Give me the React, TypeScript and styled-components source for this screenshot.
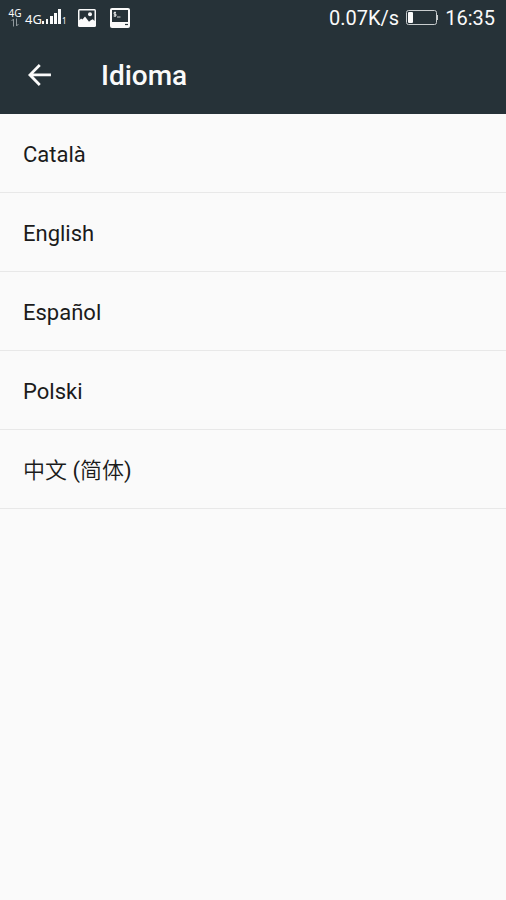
import React from "react";
import styled, { createGlobalStyle } from "styled-components";

const GlobalStyle = createGlobalStyle`
  *, *::before, *::after { box-sizing: border-box; }
  body {
    margin: 0;
    background: #fafafa;
    font-family: Roboto, "Noto Sans CJK SC", sans-serif;
  }
`;

const Screen = styled.div`
  min-height: 100vh;
  background: #fafafa;
`;

const Header = styled.header`
  background: #263238;
  color: #fafafa;
`;

const StatusBar = styled.div`
  display: flex;
  align-items: center;
  justify-content: space-between;
  height: 36px;
  padding: 0 11px 0 8px;
`;

const StatusGroup = styled.div<{ $gap: number }>`
  display: flex;
  align-items: center;
  gap: ${({ $gap }) => $gap}px;
`;

const DataMode = styled.div`
  display: flex;
  flex-direction: column;
  align-items: center;
  width: 14px;
  font-family: "Noto Sans", sans-serif;
  font-size: 10px;
  line-height: 9px;
`;

const Signal = styled.div`
  display: flex;
  align-items: baseline;
  padding-top: 2px;
  font-family: "Noto Sans", sans-serif;
  font-size: 13px;
  line-height: 16px;
`;

const SimNumber = styled.span`
  font-size: 8px;
`;

const StatusText = styled.span`
  font-size: 20px;
  line-height: 24px;
`;

const AppBar = styled.div`
  display: flex;
  align-items: center;
  gap: 43px;
  height: 78px;
  padding: 0 22px;
`;

const BackButton = styled.button`
  display: flex;
  padding: 0;
  border: 0;
  background: none;
  color: inherit;
  cursor: pointer;
`;

const Title = styled.h1`
  margin: 0;
  padding-top: 2px;
  font-size: 28px;
  font-weight: 500;
  line-height: 32px;
`;

const LanguageList = styled.ul`
  margin: 0;
  padding: 0;
  list-style: none;
`;

const LanguageItem = styled.li`
  border-bottom: 1px solid #e8e8e8;
`;

const LanguageButton = styled.button`
  display: block;
  width: 100%;
  padding: 27px 23px 23px;
  border: 0;
  background: none;
  color: #1b1b1b;
  font-family: inherit;
  font-size: 22px;
  line-height: 28px;
  text-align: left;
  cursor: pointer;
`;

const Han = styled.span`
  font-weight: 350;
`;

const DataArrows = () => (
  <svg width="10" height="9" viewBox="0 0 10 9" fill="none" stroke="#8f989c" aria-hidden="true">
    <path d="M3.5 8.5V1M1.5 3 3.5 1M6.5 .5V8M8.500 6 6.500 8" />
  </svg>
);

const SignalBars = () => (
  <svg width="20" height="15" viewBox="0 0 20 15" fill="currentColor" aria-hidden="true">
    <path d="M0 12h2v3H0zM4 10h2v5H4zM8 7h3v8H8zM12 4h3v11h-3zM16 0h3v15h-3z" />
  </svg>
);

const PictureIcon = () => (
  <svg width="18" height="18" viewBox="0 0 18 18" aria-hidden="true">
    <rect width="18" height="18" rx="1.5" fill="#fafafa" />
    <path d="M1.500 1.500h15V12l-1.700-1.800-2 1-1.800 1.600-4-5.300-2.600 3-1.400-1-1.500 1.800z" fill="#263238" />
    <circle cx="12" cy="5.2" r="2" fill="#fafafa" />
  </svg>
);

const TerminalIcon = () => (
  <svg width="20" height="20" viewBox="0 0 20 20" aria-hidden="true">
    <rect width="20" height="20" rx="2" fill="#fafafa" />
    <rect x="2" y="2" width="16" height="12" fill="#263238" />
    <path d="M15 16.5h3" stroke="#263238" strokeWidth="1.2" />
    <path d="M6 4.5H4v1.700h2V8H3.600M5 3.500v5.500M7 9h3.500" fill="none" stroke="#fafafa" strokeWidth="0.8" />
  </svg>
);

const BatteryIcon = () => (
  <svg width="32" height="16" viewBox="0 0 32 16" fill="none" role="img" aria-label="Battery">
    <rect x="0.5" y="0.5" width="30" height="14" rx="2" stroke="#c9cdcf" />
    <path d="M31 5v5" stroke="#c9cdcf" strokeWidth="2" />
    <rect x="2" y="2" width="5" height="11" rx="1" fill="#fafafa" />
  </svg>
);

const BackIcon = () => (
  <svg width="36" height="36" viewBox="0 0 24 24" fill="currentColor" aria-hidden="true">
    <path d="M19.300 11H7.500l5-5L11.200 4.700 4 12l7.200 7.300 1.300-1.300-5-5.200h11.800z" />
  </svg>
);

const languages: { code: string; label: React.ReactNode }[] = [
  { code: "ca", label: "Català" },
  { code: "en", label: "English" },
  { code: "es", label: "Español" },
  { code: "pl", label: "Polski" },
  { code: "zh-Hans", label: <><Han>中文</Han> (<Han>简体</Han>)</> },
];

export default function App() {
  return (
    <Screen>
      <GlobalStyle />
      <Header>
        <StatusBar>
          <StatusGroup $gap={14}>
            <StatusGroup $gap={12}>
              <StatusGroup $gap={3}>
                <DataMode>
                  4G
                  <DataArrows />
                </DataMode>
                <Signal>
                  4G
                  <SignalBars />
                  <SimNumber>1</SimNumber>
                </Signal>
              </StatusGroup>
              <PictureIcon />
            </StatusGroup>
            <TerminalIcon />
          </StatusGroup>
          <StatusGroup $gap={7}>
            <StatusText>0.07K/s</StatusText>
            <BatteryIcon />
            <StatusText>16:35</StatusText>
          </StatusGroup>
        </StatusBar>
        <AppBar>
          <BackButton type="button" aria-label="Back">
            <BackIcon />
          </BackButton>
          <Title>Idioma</Title>
        </AppBar>
      </Header>
      <main>
        <LanguageList>
          {languages.map(({ code, label }) => (
            <LanguageItem key={code}>
              <LanguageButton type="button" lang={code}>
                {label}
              </LanguageButton>
            </LanguageItem>
          ))}
        </LanguageList>
      </main>
    </Screen>
  );
}
